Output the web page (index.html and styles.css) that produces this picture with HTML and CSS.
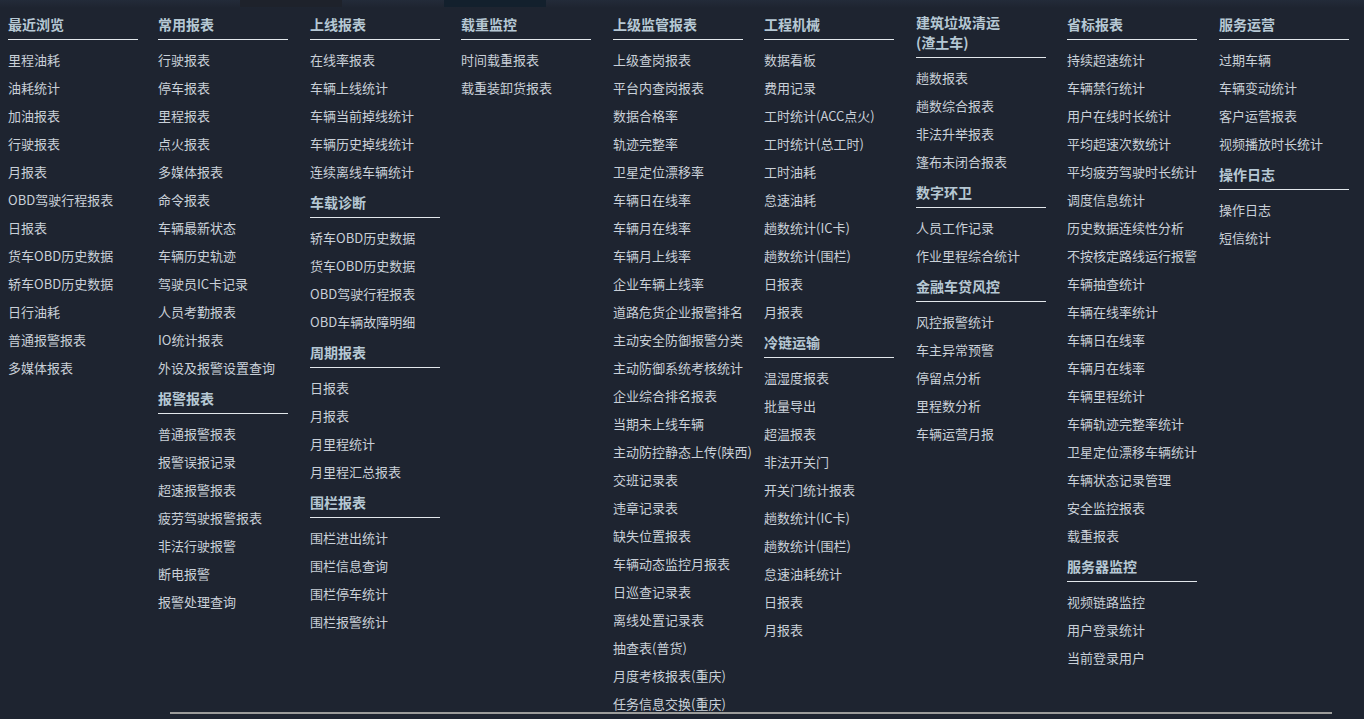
FILE: index.html
```html
<!DOCTYPE html>
<html lang="zh-CN">
<head>
<meta charset="utf-8">
<title>报表导航</title>
<link rel="stylesheet" href="styles.css">
</head>
<body>
<div class="topbar"><span class="tab tab-a"></span><span class="tab tab-b"></span></div>
<div class="menu">
  <div class="col">
    <div class="sec"><div class="title">最近浏览</div><ul class="list">
      <li>里程油耗</li><li>油耗统计</li><li>加油报表</li><li>行驶报表</li><li>月报表</li><li>OBD驾驶行程报表</li><li>日报表</li><li>货车OBD历史数据</li><li>轿车OBD历史数据</li><li>日行油耗</li><li>普通报警报表</li><li>多媒体报表</li>
    </ul></div>
  </div>
  <div class="col">
    <div class="sec"><div class="title">常用报表</div><ul class="list">
      <li>行驶报表</li><li>停车报表</li><li>里程报表</li><li>点火报表</li><li>多媒体报表</li><li>命令报表</li><li>车辆最新状态</li><li>车辆历史轨迹</li><li>驾驶员IC卡记录</li><li>人员考勤报表</li><li>IO统计报表</li><li>外设及报警设置查询</li>
    </ul></div>
    <div class="sec"><div class="title">报警报表</div><ul class="list">
      <li>普通报警报表</li><li>报警误报记录</li><li>超速报警报表</li><li>疲劳驾驶报警报表</li><li>非法行驶报警</li><li>断电报警</li><li>报警处理查询</li>
    </ul></div>
  </div>
  <div class="col">
    <div class="sec"><div class="title">上线报表</div><ul class="list">
      <li>在线率报表</li><li>车辆上线统计</li><li>车辆当前掉线统计</li><li>车辆历史掉线统计</li><li>连续离线车辆统计</li>
    </ul></div>
    <div class="sec"><div class="title">车载诊断</div><ul class="list">
      <li>轿车OBD历史数据</li><li>货车OBD历史数据</li><li>OBD驾驶行程报表</li><li>OBD车辆故障明细</li>
    </ul></div>
    <div class="sec"><div class="title">周期报表</div><ul class="list">
      <li>日报表</li><li>月报表</li><li>月里程统计</li><li>月里程汇总报表</li>
    </ul></div>
    <div class="sec"><div class="title">围栏报表</div><ul class="list">
      <li>围栏进出统计</li><li>围栏信息查询</li><li>围栏停车统计</li><li>围栏报警统计</li>
    </ul></div>
  </div>
  <div class="col">
    <div class="sec"><div class="title">载重监控</div><ul class="list">
      <li>时间载重报表</li><li>载重装卸货报表</li>
    </ul></div>
  </div>
  <div class="col">
    <div class="sec"><div class="title">上级监管报表</div><ul class="list">
      <li>上级查岗报表</li><li>平台内查岗报表</li><li>数据合格率</li><li>轨迹完整率</li><li>卫星定位漂移率</li><li>车辆日在线率</li><li>车辆月在线率</li><li>车辆月上线率</li><li>企业车辆上线率</li><li>道路危货企业报警排名</li><li>主动安全防御报警分类</li><li>主动防御系统考核统计</li><li>企业综合排名报表</li><li>当期未上线车辆</li><li>主动防控静态上传(陕西)</li><li>交班记录表</li><li>违章记录表</li><li>缺失位置报表</li><li>车辆动态监控月报表</li><li>日巡查记录表</li><li>离线处置记录表</li><li>抽查表(普货)</li><li>月度考核报表(重庆)</li><li>任务信息交换(重庆)</li>
    </ul></div>
  </div>
  <div class="col">
    <div class="sec"><div class="title">工程机械</div><ul class="list">
      <li>数据看板</li><li>费用记录</li><li>工时统计(ACC点火)</li><li>工时统计(总工时)</li><li>工时油耗</li><li>怠速油耗</li><li>趟数统计(IC卡)</li><li>趟数统计(围栏)</li><li>日报表</li><li>月报表</li>
    </ul></div>
    <div class="sec"><div class="title">冷链运输</div><ul class="list">
      <li>温湿度报表</li><li>批量导出</li><li>超温报表</li><li>非法开关门</li><li>开关门统计报表</li><li>趟数统计(IC卡)</li><li>趟数统计(围栏)</li><li>怠速油耗统计</li><li>日报表</li><li>月报表</li>
    </ul></div>
  </div>
  <div class="col col-up">
    <div class="sec"><div class="title">建筑垃圾清运<br>(渣土车)</div><ul class="list">
      <li>趟数报表</li><li>趟数综合报表</li><li>非法升举报表</li><li>篷布未闭合报表</li>
    </ul></div>
    <div class="sec"><div class="title">数字环卫</div><ul class="list">
      <li>人员工作记录</li><li>作业里程综合统计</li>
    </ul></div>
    <div class="sec"><div class="title">金融车贷风控</div><ul class="list">
      <li>风控报警统计</li><li>车主异常预警</li><li>停留点分析</li><li>里程数分析</li><li>车辆运营月报</li>
    </ul></div>
  </div>
  <div class="col">
    <div class="sec"><div class="title">省标报表</div><ul class="list">
      <li>持续超速统计</li><li>车辆禁行统计</li><li>用户在线时长统计</li><li>平均超速次数统计</li><li>平均疲劳驾驶时长统计</li><li>调度信息统计</li><li>历史数据连续性分析</li><li>不按核定路线运行报警</li><li>车辆抽查统计</li><li>车辆在线率统计</li><li>车辆日在线率</li><li>车辆月在线率</li><li>车辆里程统计</li><li>车辆轨迹完整率统计</li><li>卫星定位漂移车辆统计</li><li>车辆状态记录管理</li><li>安全监控报表</li><li>载重报表</li>
    </ul></div>
    <div class="sec"><div class="title">服务器监控</div><ul class="list">
      <li>视频链路监控</li><li>用户登录统计</li><li>当前登录用户</li>
    </ul></div>
  </div>
  <div class="col">
    <div class="sec"><div class="title">服务运营</div><ul class="list">
      <li>过期车辆</li><li>车辆变动统计</li><li>客户运营报表</li><li>视频播放时长统计</li>
    </ul></div>
    <div class="sec"><div class="title">操作日志</div><ul class="list">
      <li>操作日志</li><li>短信统计</li>
    </ul></div>
  </div>
</div>
<div class="scrollbar"></div>
</body>
</html>
```

FILE: styles.css
```css
html, body {
  margin: 0;
  padding: 0;
  height: 719px;
  overflow: hidden;
}
body {
  background: #1e2430;
  font-family: "Noto Sans CJK SC", "Noto Sans", sans-serif;
  color: #c9d0d8;
  position: relative;
}
.topbar {
  position: absolute;
  left: 0;
  top: 0;
  width: 100%;
  height: 8px;
  background: linear-gradient(#232b39, #1e2430);
}
.tab {
  position: absolute;
  top: 0;
  height: 7px;
}
.tab-a { left: 240px; width: 102px; background: #1e222b; }
.tab-b { left: 444px; width: 102px; background: #13202d; }

.menu {
  display: grid;
  grid-template-columns: 150px 152px 151px 152px 151px 152px 151px 152px 130px;
  padding: 14px 0 0 8px;
  align-items: start;
}
.col {
  width: 130px;
  display: flex;
  flex-direction: column;
  gap: 6px;
}
.col-up { margin-top: -2px; }
.title {
  font-size: 14px;
  font-weight: bold;
  line-height: 20px;
  color: #b6c8d4;
  padding-bottom: 5px;
  border-bottom: 1px solid #e2e7eb;
  white-space: nowrap;
}
.list {
  list-style: none;
  margin: 0;
  padding: 6px 0 0;
}
.list li {
  font-size: 13px;
  line-height: 28px;
  white-space: nowrap;
  color: #c9d0d8;
}
.scrollbar {
  position: absolute;
  left: 170px;
  top: 712px;
  width: 1162px;
  height: 2px;
  background: #9c9c9a;
}
```
